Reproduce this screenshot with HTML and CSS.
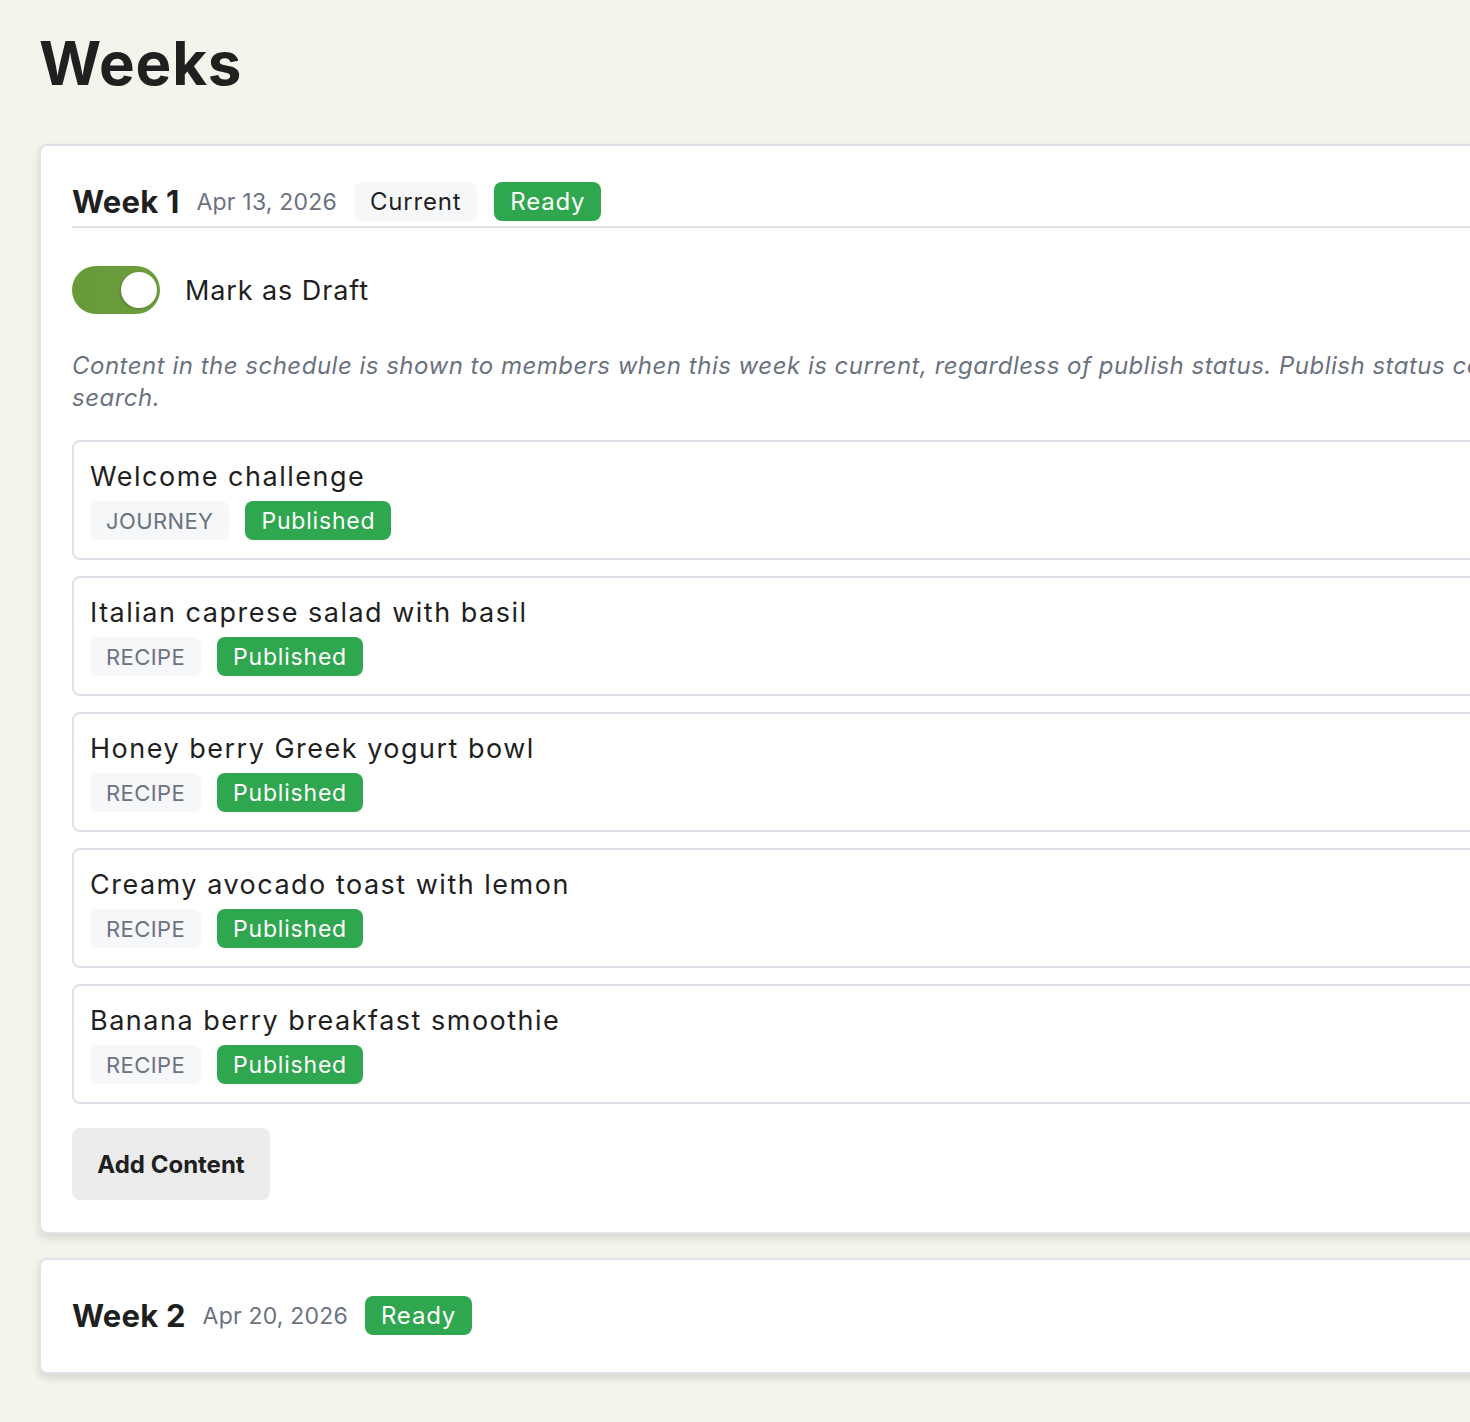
FILE: index.html
```html
<!DOCTYPE html>
<html lang="en">
<head>
<meta charset="utf-8">
<title>Weeks</title>
<link rel="stylesheet" href="styles.css">
</head>
<body>
<main class="page">
  <h1 class="page-title">Weeks</h1>
  <section class="week-card">
    <header class="week-header with-rule">
      <h2 class="week-name">Week 1</h2>
      <span class="week-date">Apr 13, 2026</span>
      <span class="pill pill-light">Current</span>
      <span class="pill pill-green">Ready</span>
    </header>
    <div class="draft-row">
      <span class="toggle"><span class="knob"></span></span>
      <span class="draft-label">Mark as Draft</span>
    </div>
    <p class="note">Content in the schedule is shown to members when this week is current, regardless of publish status. Publish status controls visibility in the library and search.</p>
    <ul class="items">
      <li class="item">
        <div class="item-title">Welcome challenge</div>
        <div class="chips"><span class="chip chip-type">JOURNEY</span><span class="chip chip-green">Published</span></div>
      </li>
      <li class="item">
        <div class="item-title">Italian caprese salad with basil</div>
        <div class="chips"><span class="chip chip-type">RECIPE</span><span class="chip chip-green">Published</span></div>
      </li>
      <li class="item">
        <div class="item-title">Honey berry Greek yogurt bowl</div>
        <div class="chips"><span class="chip chip-type">RECIPE</span><span class="chip chip-green">Published</span></div>
      </li>
      <li class="item">
        <div class="item-title">Creamy avocado toast with lemon</div>
        <div class="chips"><span class="chip chip-type">RECIPE</span><span class="chip chip-green">Published</span></div>
      </li>
      <li class="item">
        <div class="item-title">Banana berry breakfast smoothie</div>
        <div class="chips"><span class="chip chip-type">RECIPE</span><span class="chip chip-green">Published</span></div>
      </li>
    </ul>
    <button class="add-btn" type="button">Add Content</button>
  </section>
  <section class="week-card">
    <header class="week-header">
      <h2 class="week-name">Week 2</h2>
      <span class="week-date">Apr 20, 2026</span>
      <span class="pill pill-green">Ready</span>
    </header>
  </section>
</main>
</body>
</html>
```

FILE: styles.css
```css
html {
  overflow: hidden;
}
body {
  margin: 0;
  background: #f3f5ed;
  font-family: Inter, "Open Sans", sans-serif;
  color: #1f1f1f;
}
.page {
  padding: 27px 0 40px 39px;
  width: 1700px;
}
.page-title {
  font-family: Inter, "Liberation Sans", sans-serif;
  font-size: 60px;
  font-weight: 700;
  line-height: 72px;
  margin: 0 0 45px 0;
  color: #202020;
  letter-spacing: 0.8px;
}
.week-card {
  background: #fff;
  border: 2px solid #dfe2e8;
  border-radius: 8px;
  box-shadow: 0 4px 8px rgba(0, 0, 0, 0.13);
  padding: 32px 31px;
  margin-bottom: 24px;
}
.week-header {
  display: flex;
  align-items: center;
  gap: 17px;
  padding: 4px 0 5px;
}
.week-header.with-rule {
  border-bottom: 2px solid #dfe2e8;
}
.week-name {
  margin: 0;
  font-size: 31px;
  font-weight: 700;
  letter-spacing: 0.2px;
  color: #1f1f1f;
}
.week-date {
  font-size: 23px;
  letter-spacing: 0.2px;
  color: #6b7280;
}
.pill {
  display: inline-flex;
  align-items: center;
  height: 39px;
  padding: 0 16px;
  border-radius: 8px;
  font-size: 24px;
  letter-spacing: 0.8px;
}
.pill-light {
  background: #f6f7f9;
  color: #1f1f1f;
}
.pill-green {
  background: #2fa74e;
  color: #fff;
}
.draft-row {
  display: flex;
  align-items: center;
  gap: 25px;
  margin-top: 38px;
}
.toggle {
  width: 88px;
  height: 48px;
  border-radius: 24px;
  background: linear-gradient(90deg, #699a3a, #6c9e3e);
  display: flex;
  align-items: center;
  justify-content: flex-end;
  padding: 0 3px;
  box-sizing: border-box;
}
.knob {
  width: 36px;
  height: 36px;
  border-radius: 50%;
  background: #fff;
  box-shadow: -1px 1px 3px rgba(0, 0, 0, 0.2);
}
.draft-label {
  font-size: 27px;
  letter-spacing: 0.9px;
  color: #1f1f1f;
}
.note {
  margin: 36px 0 26px;
  font-size: 24px;
  line-height: 32px;
  font-style: italic;
  letter-spacing: 0.5px;
  color: #6b7280;
  width: 1840px;
}
.items {
  list-style: none;
  margin: 0;
  padding: 0;
  display: flex;
  flex-direction: column;
  gap: 16px;
}
.item {
  border: 2px solid #dfe2e8;
  border-radius: 8px;
  padding: 16px;
  height: 120px;
  box-sizing: border-box;
}
.item-title {
  font-size: 27px;
  line-height: 38px;
  letter-spacing: 1.5px;
  color: #1f1f1f;
}
.chips {
  display: flex;
  gap: 16px;
  margin-top: 5px;
}
.chip {
  display: inline-flex;
  align-items: center;
  height: 39px;
  padding: 0 16px;
  border-radius: 8px;
  font-size: 23px;
  letter-spacing: 0.8px;
}
.chip-type {
  background: #f6f7f9;
  color: #6b7280;
  font-size: 22px;
  letter-spacing: 0.4px;
}
.chip-green {
  background: #2fa74e;
  color: #fff;
}
.add-btn {
  margin-top: 24px;
  width: 198px;
  height: 72px;
  border: none;
  border-radius: 8px;
  background: #ececec;
  font-family: Inter, "Liberation Sans", sans-serif;
  font-size: 24px;
  font-weight: 700;
  color: #202020;
  padding: 0;
}
```
